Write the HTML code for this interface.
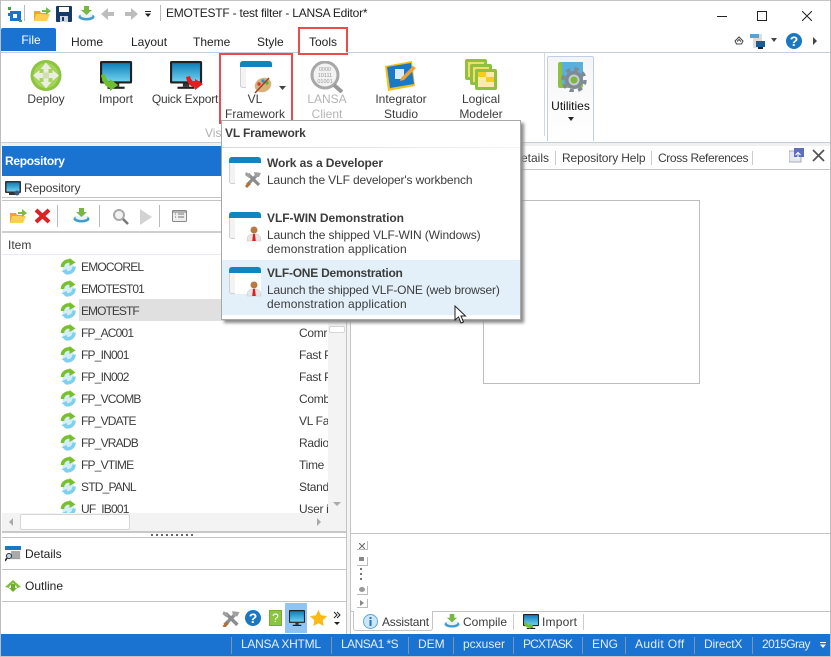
<!DOCTYPE html>
<html><head><meta charset="utf-8"><style>
html,body{margin:0;padding:0;background:#fff}
#p{position:relative;width:831px;height:657px;overflow:hidden;background:#fff;font:12px/16px "Liberation Sans",sans-serif;color:#3c3c3c}
#p div,#p span,#p svg{position:absolute}
.t{white-space:nowrap}
.c{white-space:nowrap;text-align:center}
.b{font-weight:bold}
.w{color:#fff}
.n{letter-spacing:-.8px}
.s{color:#e4eefa}
</style></head><body><div id="p">
<svg width="0" height="0" style="left:0;top:0"><defs>
<linearGradient id="scr" x1="0" y1="0" x2="0" y2="1"><stop offset="0" stop-color="#0f7fb8"/><stop offset="1" stop-color="#6fd0ee"/></linearGradient>
<g id="ref"><circle cx="8" cy="8.500" r="6" fill="#d4eef8"/><path d="M2.500 9A6 6 0 0 1 11 3.500" fill="none" stroke="#78bf2c" stroke-width="3.500"/><path d="M9.500 0l6 4.500-6 3.500Z" fill="#78bf2c"/><path d="M14 8.500A6 6 0 0 1 5 14" fill="none" stroke="#7fd0f0" stroke-width="3.500"/><path d="M7 11v6L1.500 13Z" fill="#7fd0f0"/></g>
<g id="win"><rect x="0.500" y="0.500" width="31" height="26" rx="2" fill="#f3f3f3" stroke="#d0d0d0"/><rect x="6" y="6" width="26" height="21" fill="#fff"/><path d="M0 6V3a3 3 0 0 1 3-3h26a3 3 0 0 1 3 3v3Z" fill="#0f86c0"/></g>
<g id="person"><circle cx="7" cy="4" r="3.500" fill="#b87a42"/><path d="M0 15c0-5 2-7 7-7s7 2 7 7Z" fill="#e6e6e6" stroke="#c4c4c4" stroke-width=".5"/><path d="M6 8h2l.8 7H5.200Z" fill="#e02020"/></g>
<g id="mon"><rect x="0" y="0" width="30" height="21" rx="1.500" fill="#222"/><rect x="2" y="2" width="26" height="17" fill="url(#scr)"/><rect x="12" y="21" width="6" height="3" fill="#333"/><rect x="7" y="24" width="16" height="2" fill="#222"/></g>
<g id="tools"><path d="M2 14 11 5M3 3l11 11" stroke="#8c8c8c" stroke-width="3.200"/><path d="M9 1l7 1-2 4-4 0ZM1 1l5 3-2 3-4-3Z" fill="#a0a0a0"/><path d="M1 16l4-4" stroke="#b07030" stroke-width="2.800"/></g>
</defs></svg>

<!-- window frame -->
<div style="left:0;top:0;width:831px;height:1px;background:#c4c4c4"></div>
<div style="left:0;top:0;width:1px;height:657px;background:#bdbdbd"></div>
<div style="left:830px;top:0;width:1px;height:657px;background:#bdbdbd"></div>

<!-- title bar -->
<svg style="left:8px;top:6px" width="14" height="16" viewBox="0 0 14 16"><rect x="0" y="1" width="3" height="3" fill="#3aa655"/><rect x="2" y="5" width="11" height="10" fill="#1a73d1"/><rect x="5" y="8" width="4" height="4" fill="#fff"/><rect x="0" y="7" width="3" height="3" fill="#1a73d1"/><rect x="11" y="14" width="3" height="2" fill="#3aa655"/></svg>
<div style="left:24px;top:5px;width:1px;height:16px;background:#bbb"></div>
<svg style="left:34px;top:7px" width="17" height="15" viewBox="0 0 17 15"><path d="M0 4h6l1 2h6v8H0Z" fill="#e9a820"/><path d="M2 7h14l-3 7H0Z" fill="#fbd050"/><path d="M8 3h4V0l5 4-5 4V5H8Z" fill="#7cb84a"/></svg>
<svg style="left:56px;top:6px" width="16" height="16" viewBox="0 0 16 16"><rect width="16" height="16" rx="1" fill="#163a66"/><rect x="3" y="1" width="10" height="5" fill="#fff"/><rect x="4" y="10" width="8" height="6" fill="#ccd6e2"/><rect x="6" y="11" width="2" height="4" fill="#163a66"/></svg>
<svg style="left:78px;top:6px" width="17" height="15" viewBox="0 0 17 15"><ellipse cx="8.500" cy="11" rx="8" ry="3.500" fill="#3f9ccb"/><ellipse cx="8.500" cy="9.500" rx="6" ry="2.500" fill="#e9f4fa"/><path d="M6 0h5v4h3l-5.500 5L3 4h3Z" fill="#79b743"/></svg>
<svg style="left:101px;top:7px" width="14" height="14" viewBox="0 0 14 14"><path d="M7 1 0 7l7 6V9h6V5H7Z" fill="#bdbdbd"/></svg>
<svg style="left:124px;top:7px" width="14" height="14" viewBox="0 0 14 14"><path d="M7 1l7 6-7 6V9H1V5h6Z" fill="#bdbdbd"/></svg>
<svg style="left:144px;top:10px" width="8" height="8" viewBox="0 0 8 8"><rect x="1" y="1" width="6" height="1" fill="#222"/><path d="M1 3.500h6L4 7Z" fill="#222"/></svg>
<div style="left:160px;top:5px;width:1px;height:16px;background:#bbb"></div>
<span class="t" style="left:166px;top:5px;color:#222;letter-spacing:-.23px">EMOTESTF - test filter - LANSA Editor*</span>
<div style="left:717px;top:16px;width:10px;height:1px;background:#222"></div>
<div style="left:757px;top:11px;width:8px;height:8px;border:1px solid #222"></div>
<svg style="left:802px;top:11px" width="10" height="10" viewBox="0 0 10 10"><path d="M0 0 10 10M10 0 0 10" stroke="#222" stroke-width="1"/></svg>

<!-- tabs -->
<div style="left:1px;top:28px;width:55px;height:23px;background:#1a73d1;border-radius:2px 2px 0 0"></div>
<span class="c w" style="left:1px;top:32px;width:60px">File</span>
<span class="t" style="left:71px;top:34px;color:#222">Home</span>
<span class="t" style="left:131px;top:34px;color:#222">Layout</span>
<span class="t" style="left:193px;top:34px;color:#222">Theme</span>
<span class="t" style="left:257px;top:34px;color:#222">Style</span>
<span class="t" style="left:309px;top:34px;color:#222">Tools</span>
<div style="left:298px;top:27px;width:46px;height:24px;border:2px solid #e84c4c;box-sizing:content-box"></div>
<svg style="left:734px;top:36px" width="10" height="9" viewBox="0 0 10 9"><path d="M1 5 5 1l4 4-1.500 3h-5ZM3 5.500 5 3.500l2 2" fill="none" stroke="#444"/></svg>
<svg style="left:750px;top:33px" width="16" height="16" viewBox="0 0 16 16"><rect x="3" y="1" width="9" height="14" fill="#ddd"/><rect x="0" y="1" width="9" height="4" fill="#5aa0d0"/><rect x="6" y="8" width="9" height="6" fill="#1b5d92"/><rect x="8" y="14" width="5" height="2" fill="#222"/></svg>
<svg style="left:770px;top:38px" width="8" height="5" viewBox="0 0 8 5"><path d="M1 0h6L4 4Z" fill="#444"/></svg>
<div style="left:786px;top:33px;width:16px;height:16px;border-radius:50%;background:#1a78c2"></div>
<span class="c b w" style="left:786px;top:33px;width:16px;font-size:14px">?</span>
<svg style="left:813px;top:37px" width="5" height="8" viewBox="0 0 5 8"><path d="M0 0 4 4 0 8Z" fill="#444"/></svg>

<!-- ribbon borders -->
<div style="left:1px;top:52px;width:297px;height:1px;background:#c3cfdc"></div>
<div style="left:346px;top:52px;width:484px;height:1px;background:#c3cfdc"></div>
<div style="left:1px;top:142px;width:829px;height:1px;background:#c3cfdc"></div>
<div style="left:1px;top:143px;width:829px;height:3px;background:#f0f0f0"></div>

<!-- ribbon icons -->
<svg style="left:30px;top:59px" width="32" height="33" viewBox="0 0 32 32"><circle cx="16" cy="16" r="15.500" fill="#8cc63f"/><circle cx="16" cy="16" r="12.500" fill="#a6d35a"/><path d="M16 3l5.500 6.500h-3V13h-5V9.500h-3ZM16 29l5.500-6.500h-3V19h-5v3.500h-3ZM3 16l6.500-5.500v3H13v5H9.500v3ZM29 16l-6.500-5.500v3H19v5h3.500v3Z" fill="#e9eee0"/><rect x="13" y="13" width="6" height="6" fill="#cfe0ae"/></svg>
<svg style="left:100px;top:61px" width="34" height="30" viewBox="0 0 34 30"><g transform="scale(1.070)"><use href="#mon"/></g><path d="M1 14 5 13C6 18 8 20 10 21L10 18 18 24 10 30 10 27C5 26 2 20 1 14Z" fill="#6fbe2e"/></svg>
<svg style="left:170px;top:61px" width="34" height="30" viewBox="0 0 34 30"><g transform="scale(1.070)"><use href="#mon"/></g><path d="M16 16 20 15C21 19 23 21 25 21L25 18 33 23 25 29 25 26C20 26 17 22 16 16Z" fill="#e41c1c"/></svg>
<svg style="left:240px;top:61px" width="33" height="33" viewBox="0 0 33 33"><use href="#win"/><ellipse cx="23" cy="24" rx="8.500" ry="7" fill="#d6b27a" transform="rotate(-25 23 24)"/><circle cx="19" cy="23" r="1.700" fill="#e03030"/><circle cx="23" cy="20" r="1.700" fill="#3a8ed0"/><circle cx="27" cy="22" r="1.700" fill="#60b030"/><path d="M15 32 29 17" stroke="#a04020" stroke-width="1.500"/></svg>
<svg style="left:279px;top:86px" width="8" height="5" viewBox="0 0 8 5"><path d="M0 0h7L3.500 4Z" fill="#444"/></svg>
<svg style="left:309px;top:61px" width="34" height="32" viewBox="0 0 34 32"><circle cx="16" cy="14" r="13" fill="#f2f2f2" stroke="#a8a8a8" stroke-width="3"/><path d="M25 24l8 7" stroke="#999" stroke-width="4"/><text x="16" y="10" font-size="5.500" fill="#999" text-anchor="middle" font-family="Liberation Sans">0000</text><text x="16" y="16" font-size="5.500" fill="#999" text-anchor="middle" font-family="Liberation Sans">10111</text><text x="16" y="22" font-size="5.500" fill="#999" text-anchor="middle" font-family="Liberation Sans">01001</text></svg>
<svg style="left:384px;top:60px" width="33" height="33" viewBox="0 0 33 33"><path d="M1 6 28 1l3 25-27 5Z" fill="#f0c020"/><path d="M3 7 27 3l3 21-24 4Z" fill="#1a78c8"/><rect x="11" y="9" width="9" height="10" fill="#d8ecf8"/><path d="M17 18 29 6l3 2-12 12-4 1Z" fill="#f2a030"/></svg>
<svg style="left:465px;top:59px" width="33" height="32" viewBox="0 0 33 32"><rect x="0" y="0" width="22" height="21" rx="2" fill="#8ec13e"/><rect x="3" y="3" width="16" height="15" fill="#f6dc6a"/><rect x="5" y="5" width="22" height="21" rx="2" fill="#8ec13e"/><rect x="8" y="8" width="16" height="15" fill="#f6dc6a"/><rect x="10" y="10" width="22" height="21" rx="2" fill="#8ec13e"/><rect x="13" y="13" width="16" height="15" fill="#fbeaa8"/><rect x="13" y="13" width="8" height="5" fill="#f6cc20"/><rect x="21" y="18" width="8" height="5" fill="#f6cc20"/></svg>

<!-- ribbon labels -->
<span class="c" style="left:16px;top:91px;width:60px">Deploy</span>
<span class="c" style="left:86px;top:91px;width:60px">Import</span>
<span class="c" style="left:146px;top:91px;width:78px;letter-spacing:-.2px">Quick Export</span>
<span class="c" style="left:225px;top:91px;width:60px">VL</span>
<span class="c" style="left:225px;top:106px;width:60px">Framework</span>
<span class="c" style="left:297px;top:91px;width:60px;color:#b4b4b4">LANSA</span>
<span class="c" style="left:297px;top:106px;width:60px;color:#b4b4b4">Client</span>
<span class="c" style="left:366px;top:91px;width:70px">Integrator</span>
<span class="c" style="left:366px;top:106px;width:70px">Studio</span>
<span class="c" style="left:451px;top:91px;width:60px">Logical</span>
<span class="c" style="left:451px;top:106px;width:60px">Modeler</span>
<span class="t" style="left:205px;top:125px;color:#b0b0b0">Vis</span>
<div style="left:219px;top:53px;width:70px;height:67px;border:2px solid #e84c4c"></div>
<div style="left:544px;top:52px;width:1px;height:84px;background:#d0d8e0"></div>
<div style="left:547px;top:56px;width:45px;height:84px;border:1px solid #c0d0e2;border-bottom:0;border-radius:2px 2px 0 0;background:linear-gradient(#f5f5f5,#fbfbfb 60%,#fff)"></div>
<svg style="left:558px;top:62px" width="30" height="30" viewBox="0 0 30 30"><rect x="0" y="0" width="25" height="26" rx="2" fill="#8ec13e"/><rect x="4" y="0" width="21" height="22" fill="#5ab0dc"/><circle cx="16" cy="18" r="9" fill="#7f8a94"/><circle cx="16" cy="18" r="11" fill="none" stroke="#7f8a94" stroke-width="3.500" stroke-dasharray="4.320 4.320"/><circle cx="16" cy="18" r="5.500" fill="#c4ccd2"/><circle cx="16" cy="18" r="3.500" fill="#7cb83c"/></svg>
<span class="c" style="left:547px;top:98px;width:47px;color:#111">Utilities</span>
<svg style="left:568px;top:117px" width="6" height="5" viewBox="0 0 6 5"><path d="M0 0h6L3 4Z" fill="#222"/></svg>

<!-- left panel -->
<div style="left:2px;top:146px;width:344px;height:30px;background:#1a73d1"></div>
<span class="t b w" style="left:5px;top:153px;letter-spacing:-.3px">Repository</span>
<div style="left:2px;top:197px;width:344px;height:1px;background:#c4c4c4"></div>
<svg style="left:5px;top:181px" width="17" height="15" viewBox="0 0 17 15"><rect width="16" height="12" rx="1" fill="#333"/><rect x="1.500" y="1.500" width="13" height="9" fill="url(#scr)"/><rect x="4" y="12" width="8" height="2" fill="#333"/><circle cx="12" cy="12" r="2.500" fill="#3a5a80"/></svg>
<span class="t" style="left:24px;top:180px;letter-spacing:-.1px">Repository</span>
<div style="left:2px;top:200px;width:344px;height:1px;background:#c4c4c4"></div>
<div style="left:2px;top:231px;width:344px;height:2px;background:#cfcfcf"></div>
<svg style="left:10px;top:209px" width="17" height="15" viewBox="0 0 17 15"><path d="M0 4h6l1 2h6v8H0Z" fill="#e9a820"/><path d="M2 7h14l-3 7H0Z" fill="#fbd050"/><path d="M8 3h4V0l5 4-5 4V5H8Z" fill="#7cb84a"/></svg>
<svg style="left:34px;top:208px" width="17" height="16" viewBox="0 0 17 16"><path d="M2 2 15 14M15 2 2 14" stroke="#e02020" stroke-width="4"/></svg>
<div style="left:57px;top:205px;width:1px;height:22px;background:#bbb"></div>
<svg style="left:73px;top:208px" width="17" height="15" viewBox="0 0 17 15"><ellipse cx="8.500" cy="11" rx="8" ry="3.500" fill="#3f9ccb"/><ellipse cx="8.500" cy="9.500" rx="6" ry="2.500" fill="#e9f4fa"/><path d="M6 0h5v4h3l-5.500 5L3 4h3Z" fill="#79b743"/></svg>
<div style="left:99px;top:205px;width:1px;height:22px;background:#bbb"></div>
<svg style="left:112px;top:209px" width="17" height="16" viewBox="0 0 17 16"><circle cx="7" cy="6" r="5" fill="#f2f2f2" stroke="#aaa" stroke-width="2"/><path d="M11 10l5 5" stroke="#777" stroke-width="2.500"/></svg>
<svg style="left:139px;top:209px" width="14" height="16" viewBox="0 0 14 16"><path d="M1 0 13 8 1 16Z" fill="#d2d2d2"/></svg>
<div style="left:159px;top:205px;width:1px;height:22px;background:#bbb"></div>
<svg style="left:172px;top:210px" width="15" height="12" viewBox="0 0 15 12"><rect x=".5" y=".5" width="14" height="11" rx="1" fill="#eee" stroke="#888"/><path d="M3 4h1M3 7h1M6 4h6M6 7h6M0 2h15" stroke="#777"/></svg>
<span class="t" style="left:8px;top:237px">Item</span>
<div style="left:2px;top:254px;width:344px;height:1px;background:#e8ecf0"></div>

<div style="left:79px;top:299px;width:267px;height:22px;background:#e0e0e0"></div>
<svg style="left:60px;top:258px" width="16" height="17" viewBox="0 0 16 17"><use href="#ref"/></svg>
<svg style="left:60px;top:280px" width="16" height="17" viewBox="0 0 16 17"><use href="#ref"/></svg>
<svg style="left:60px;top:302px" width="16" height="17" viewBox="0 0 16 17"><use href="#ref"/></svg>
<svg style="left:60px;top:324px" width="16" height="17" viewBox="0 0 16 17"><use href="#ref"/></svg>
<svg style="left:60px;top:346px" width="16" height="17" viewBox="0 0 16 17"><use href="#ref"/></svg>
<svg style="left:60px;top:368px" width="16" height="17" viewBox="0 0 16 17"><use href="#ref"/></svg>
<svg style="left:60px;top:390px" width="16" height="17" viewBox="0 0 16 17"><use href="#ref"/></svg>
<svg style="left:60px;top:412px" width="16" height="17" viewBox="0 0 16 17"><use href="#ref"/></svg>
<svg style="left:60px;top:434px" width="16" height="17" viewBox="0 0 16 17"><use href="#ref"/></svg>
<svg style="left:60px;top:456px" width="16" height="17" viewBox="0 0 16 17"><use href="#ref"/></svg>
<svg style="left:60px;top:478px" width="16" height="17" viewBox="0 0 16 17"><use href="#ref"/></svg>
<svg style="left:60px;top:500px" width="16" height="17" viewBox="0 0 16 17"><use href="#ref"/></svg>
<span class="t n" style="left:81px;top:259px">EMOCOREL</span>
<span class="t n" style="left:81px;top:281px;letter-spacing:-.95px">EMOTEST01</span>
<span class="t n" style="left:81px;top:303px;letter-spacing:-.95px">EMOTESTF</span>
<span class="t n" style="left:81px;top:325px">FP_AC001</span>
<span class="t n" style="left:81px;top:347px">FP_IN001</span>
<span class="t n" style="left:81px;top:369px">FP_IN002</span>
<span class="t n" style="left:81px;top:391px">FP_VCOMB</span>
<span class="t n" style="left:81px;top:413px">FP_VDATE</span>
<span class="t n" style="left:81px;top:435px">FP_VRADB</span>
<span class="t n" style="left:81px;top:457px">FP_VTIME</span>
<span class="t n" style="left:81px;top:479px">STD_PANL</span>
<span class="t n" style="left:81px;top:501px">UF_IB001</span>
<span class="t" style="left:299px;top:325px;letter-spacing:-.3px">Comr</span>
<span class="t" style="left:299px;top:347px;letter-spacing:-.3px">Fast P</span>
<span class="t" style="left:299px;top:369px;letter-spacing:-.3px">Fast P</span>
<span class="t" style="left:299px;top:391px;letter-spacing:-.3px">Comb</span>
<span class="t" style="left:299px;top:413px;letter-spacing:-.3px">VL Fa</span>
<span class="t" style="left:299px;top:435px;letter-spacing:-.3px">Radio</span>
<span class="t" style="left:299px;top:457px;letter-spacing:-.3px">Time</span>
<span class="t" style="left:299px;top:479px;letter-spacing:-.3px">Stand</span>
<span class="t" style="left:299px;top:501px;letter-spacing:-.3px">User i</span>

<!-- scrollbars -->
<div style="left:2px;top:513px;width:344px;height:18px;background:#f3f3f3"></div>
<div style="left:328px;top:255px;width:18px;height:276px;background:#f3f3f3"></div>
<div style="left:329px;top:326px;width:16px;height:7px;background:#fff;border:1px solid #d6d6d6;box-sizing:border-box;border-radius:2px"></div>
<svg style="left:333px;top:502px" width="8" height="5" viewBox="0 0 8 5"><path d="M0 0h8L4 4Z" fill="#aaa"/></svg>
<div style="left:20px;top:514px;width:110px;height:16px;background:#fff;border:1px solid #d6d6d6;box-sizing:border-box;border-radius:2px"></div>
<svg style="left:9px;top:518px" width="5" height="8" viewBox="0 0 5 8"><path d="M4 0 0 4l4 4Z" fill="#aaa"/></svg>
<svg style="left:317px;top:518px" width="5" height="8" viewBox="0 0 5 8"><path d="M0 0 4 4 0 8Z" fill="#aaa"/></svg>
<div style="left:2px;top:531px;width:344px;height:2px;background:#c8c8c8"></div>
<div style="left:151px;top:534px;width:43px;height:2px;background:repeating-linear-gradient(90deg,#666 0 2px,transparent 2px 5px)"></div>
<div style="left:2px;top:537px;width:344px;height:1px;background:#c4c4c4"></div>
<div style="left:2px;top:569px;width:344px;height:1px;background:#c4c4c4"></div>
<div style="left:2px;top:601px;width:344px;height:1px;background:#c4c4c4"></div>
<svg style="left:5px;top:546px" width="16" height="16" viewBox="0 0 16 16"><rect width="16" height="13" fill="#fff" stroke="#ccc" stroke-width=".5"/><rect width="16" height="4" fill="#1a78c2"/><path d="M6 6h9M6 8h9M6 10h9M6 12h9" stroke="#555"/><circle cx="4" cy="10" r="2.500" fill="#bcdcf0" stroke="#333"/><path d="M2 12 0 15" stroke="#222" stroke-width="1.500"/></svg>
<span class="t" style="left:25px;top:546px;color:#222">Details</span>
<svg style="left:5px;top:579px" width="16" height="13" viewBox="0 0 16 13"><path d="M0 8 8 1l8 7-4 1v-1L8 4 4 8v1Z" fill="#82bd3c"/><path d="M6 5h4v4h2l-4 4-4-4h2Z" fill="#6cb02c"/></svg>
<span class="t" style="left:25px;top:578px;color:#222">Outline</span>
<svg style="left:222px;top:610px" width="18" height="17" viewBox="0 0 16 16"><use href="#tools"/></svg>
<div style="left:245px;top:610px;width:16px;height:16px;border-radius:50%;background:#1a78c2"></div>
<span class="c b w" style="left:245px;top:610px;width:16px;font-size:14px">?</span>
<div style="left:269px;top:610px;width:13px;height:16px;background:#8cc63f;border:1px solid #78ad30;box-sizing:border-box"></div>
<span class="c w" style="left:269px;top:610px;width:13px">?</span>
<div style="left:285px;top:603px;width:22px;height:30px;background:#8ec5f2"></div>
<svg style="left:289px;top:610px" width="16" height="16" viewBox="0 0 30 26" preserveAspectRatio="none"><use href="#mon"/></svg>
<svg style="left:310px;top:610px" width="17" height="16" viewBox="0 0 17 16"><path d="M8.500 0l2.600 5.300 5.900.8-4.300 4.100 1 5.800-5.200-2.800L3.300 16l1-5.800L0 6.100l5.900-.8Z" fill="#fdb913"/></svg>
<svg style="left:333px;top:611px" width="9" height="16" viewBox="0 0 9 16"><path d="M1 1l3 3-3 3M4 1l3 3-3 3" fill="none" stroke="#222"/><path d="M1 11h6l-3 3Z" fill="#222"/></svg>

<!-- splitter -->
<div style="left:346px;top:143px;width:5px;height:491px;background:#f4f4f4"></div>
<div style="left:346px;top:146px;width:1px;height:488px;background:#c4c4c4"></div>
<div style="left:350px;top:146px;width:1px;height:488px;background:#c4c4c4"></div>

<!-- right panel tabs -->
<div style="left:351px;top:169px;width:479px;height:1px;background:#c4c4c4"></div>
<span class="t" style="left:521px;top:150px">etails</span>
<div style="left:555px;top:151px;width:1px;height:14px;background:#ccc"></div>
<span class="t" style="left:562px;top:150px;letter-spacing:-.13px">Repository Help</span>
<div style="left:651px;top:151px;width:1px;height:14px;background:#ccc"></div>
<span class="t" style="left:658px;top:150px;letter-spacing:-.37px">Cross References</span>
<div style="left:752px;top:151px;width:1px;height:14px;background:#ccc"></div>
<svg style="left:789px;top:148px" width="16" height="15" viewBox="0 0 16 15"><rect x="0" y="3" width="12" height="11" fill="#e4e8f2" stroke="#aab"/><rect x="5" y="0" width="10" height="9" fill="#5f6fc0"/><path d="M9 11V5M6.500 7 9 4.500 11.500 7" stroke="#fff" fill="none"/></svg>
<svg style="left:812px;top:149px" width="13" height="13" viewBox="0 0 13 13"><path d="M1 1 12 12M12 1 1 12" stroke="#555" stroke-width="1.800"/></svg>
<div style="left:483px;top:200px;width:217px;height:184px;box-sizing:border-box;border:1px solid #bdbdbd;background:#fff"></div>

<!-- bottom right -->
<div style="left:351px;top:533px;width:479px;height:1px;background:#c4c4c4"></div>
<div style="left:357px;top:541px;width:10px;height:8px;border-right:1px solid #bbb;border-bottom:1px solid #bbb"></div>
<svg style="left:359px;top:543px" width="6" height="6" viewBox="0 0 6 6"><path d="M0 0 6 6M6 0 0 6" stroke="#666"/></svg>
<div style="left:357px;top:557px;width:10px;height:8px;border-right:1px solid #bbb;border-bottom:1px solid #bbb"></div>
<div style="left:359px;top:557px;width:5px;height:4px;background:#888"></div>
<div style="left:360px;top:568px;width:2px;height:2px;background:#777"></div>
<div style="left:360px;top:573px;width:2px;height:2px;background:#777"></div>
<div style="left:360px;top:578px;width:2px;height:2px;background:#777"></div>
<div style="left:357px;top:586px;width:10px;height:8px;border-right:1px solid #bbb;border-bottom:1px solid #bbb"></div>
<div style="left:359px;top:587px;width:6px;height:5px;background:#999;border-radius:50%"></div>
<div style="left:357px;top:599px;width:10px;height:8px;border-right:1px solid #bbb;border-bottom:1px solid #bbb"></div>
<svg style="left:360px;top:600px" width="4" height="6" viewBox="0 0 4 6"><path d="M0 0 4 3 0 6Z" fill="#888"/></svg>
<div style="left:351px;top:611px;width:479px;height:1px;background:#c4c4c4"></div>
<div style="left:353px;top:611px;width:80px;height:20px;box-sizing:border-box;background:#fff;border:1px solid #c4c4c4;border-top:0;border-radius:0 0 3px 3px"></div>
<svg style="left:363px;top:614px" width="15" height="15" viewBox="0 0 15 15"><circle cx="7.500" cy="7.500" r="7" fill="#cfe6f8" stroke="#5aa8e0"/><rect x="6.500" y="6" width="2" height="6" fill="#1a78c2"/><rect x="6.500" y="3" width="2" height="2" fill="#1a78c2"/></svg>
<span class="t" style="left:382px;top:614px;letter-spacing:-.2px">Assistant</span>
<svg style="left:444px;top:614px" width="16" height="14" viewBox="0 0 17 15"><ellipse cx="8.500" cy="11" rx="8" ry="3.500" fill="#3f9ccb"/><ellipse cx="8.500" cy="9.500" rx="6" ry="2.500" fill="#e9f4fa"/><path d="M6 0h5v4h3l-5.500 5L3 4h3Z" fill="#79b743"/></svg>
<span class="t" style="left:463px;top:614px">Compile</span>
<div style="left:513px;top:614px;width:1px;height:16px;background:#ccc"></div>
<svg style="left:523px;top:614px" width="16" height="15" viewBox="0 0 30 26" preserveAspectRatio="none"><use href="#mon"/><path d="M2 15c0 6 5 9 10 8v3l8-5-8-5v3c-2 0-4-1-5-4Z" fill="#6fbe2e"/></svg>
<span class="t" style="left:542px;top:614px;letter-spacing:.2px">Import</span>
<div style="left:583px;top:614px;width:1px;height:16px;background:#ccc"></div>

<!-- status bar -->
<div style="left:1px;top:634px;width:829px;height:22px;background:#1a73d1"></div>
<div style="left:0;top:656px;width:831px;height:1px;background:#c4c4c4"></div>
<div style="left:231px;top:637px;width:1px;height:17px;background:#7d94ad"></div>
<span class="t s" style="left:241px;top:636px;letter-spacing:-.27px">LANSA XHTML</span>
<div style="left:331px;top:637px;width:1px;height:17px;background:#7d94ad"></div>
<span class="t s" style="left:341px;top:636px;letter-spacing:-.55px">LANSA1 *S</span>
<div style="left:408px;top:637px;width:1px;height:17px;background:#7d94ad"></div>
<span class="t s" style="left:418px;top:636px">DEM</span>
<div style="left:453px;top:637px;width:1px;height:17px;background:#7d94ad"></div>
<span class="t s" style="left:463px;top:636px">pcxuser</span>
<div style="left:513px;top:637px;width:1px;height:17px;background:#7d94ad"></div>
<span class="t s" style="left:523px;top:636px;letter-spacing:-.85px">PCXTASK</span>
<div style="left:582px;top:637px;width:1px;height:17px;background:#7d94ad"></div>
<span class="t s" style="left:592px;top:636px">ENG</span>
<div style="left:625px;top:637px;width:1px;height:17px;background:#7d94ad"></div>
<span class="t s" style="left:635px;top:636px;letter-spacing:.35px">Audit Off</span>
<div style="left:694px;top:637px;width:1px;height:17px;background:#7d94ad"></div>
<span class="t s" style="left:704px;top:636px;letter-spacing:-.15px">DirectX</span>
<div style="left:752px;top:637px;width:1px;height:17px;background:#7d94ad"></div>
<span class="t s" style="left:762px;top:636px;letter-spacing:-.6px">2015Gray</span>
<svg style="left:820px;top:642px" width="7" height="7" viewBox="0 0 7 7"><rect width="6" height="1" fill="#fff"/><path d="M0 2.500h6L3 6Z" fill="#fff"/></svg>

<!-- dropdown menu -->
<div style="left:221px;top:120px;width:300px;height:200px;box-sizing:border-box;background:#fff;border:1px solid #a8a8a8;box-shadow:3px 3px 3px #8c8c8c"></div>
<span class="t b" style="left:225px;top:125px;letter-spacing:-.15px">VL Framework</span>
<div style="left:222px;top:147px;width:298px;height:1px;background:linear-gradient(90deg,#d8d8d8,#f4f4f4)"></div>
<div style="left:222px;top:260px;width:298px;height:55px;background:#e3f0fa"></div>
<svg style="left:229px;top:157px" width="33" height="31" viewBox="0 0 33 31"><use href="#win"/><g transform="translate(16 14)"><use href="#tools"/></g></svg>
<svg style="left:229px;top:212px" width="33" height="30" viewBox="0 0 33 30"><use href="#win"/><g transform="translate(18 14)"><use href="#person"/></g></svg>
<svg style="left:229px;top:267px" width="33" height="30" viewBox="0 0 33 30"><use href="#win"/><g transform="translate(18 14)"><use href="#person"/></g></svg>
<span class="t b" style="left:267px;top:155px;letter-spacing:-.1px">Work as a Developer</span>
<span class="t" style="left:267px;top:172px;letter-spacing:-.14px">Launch the VLF developer's workbench</span>
<span class="t b" style="left:267px;top:210px;letter-spacing:-.05px">VLF-WIN Demonstration</span>
<span class="t" style="left:267px;top:227px;letter-spacing:-.11px">Launch the shipped VLF-WIN (Windows)</span>
<span class="t" style="left:267px;top:241px;letter-spacing:.12px">demonstration application</span>
<span class="t b" style="left:267px;top:265px;letter-spacing:-.24px">VLF-ONE Demonstration</span>
<span class="t" style="left:267px;top:282px;letter-spacing:-.17px">Launch the shipped VLF-ONE (web browser)</span>
<span class="t" style="left:267px;top:296px;letter-spacing:.12px">demonstration application</span>
<svg style="left:454px;top:305px" width="13" height="20" viewBox="0 0 13 20"><path d="M1 1v14l3.500-3 2.500 6 2.500-1-2.500-6h4.500Z" fill="#fff" stroke="#222"/></svg>
</div></body></html>
